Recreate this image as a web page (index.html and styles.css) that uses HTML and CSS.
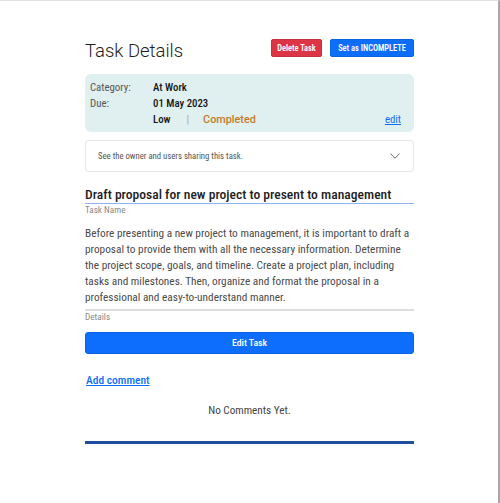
FILE: index.html
```html
<!DOCTYPE html>
<html>
<head>
<meta charset="utf-8">
<link rel="stylesheet" href="styles.css">
</head>
<body>
<div class="frame">
  <main class="page">
    <header class="head">
      <h1 class="title">Task Details</h1>
      <div class="actions">
        <button class="btn btn-red">Delete Task</button>
        <button class="btn btn-blue">Set as INCOMPLETE</button>
      </div>
    </header>

    <section class="info">
      <div class="row"><span class="lbl">Category:</span><span class="val">At Work</span></div>
      <div class="row"><span class="lbl">Due:</span><span class="val">01 May 2023</span></div>
      <div class="row">
        <span class="lbl"></span>
        <span class="val">Low</span>
        <span class="sep">|</span>
        <span class="status">Completed</span>
        <a class="edit" href="#">edit</a>
      </div>
    </section>

    <section class="accordion">
      <span>See the owner and users sharing this task.</span>
      <svg class="chev" width="10" height="6" viewBox="0 0 10 6"><path d="M0.5 0.6 L5 5.2 L9.5 0.6" fill="none" stroke="#555" stroke-width="0.9"/></svg>
    </section>

    <div class="field">
      <div class="name">Draft proposal for new project to present to management</div>
      <div class="flabel">Task Name</div>
    </div>

    <div class="field-details">
      <div class="details">Before presenting a new project to management, it is important to draft a proposal to provide them with all the necessary information. Determine the project scope, goals, and timeline. Create a project plan, including tasks and milestones. Then, organize and format the proposal in a professional and easy-to-understand manner.</div>
      <div class="flabel">Details</div>
    </div>

    <button class="btn-wide">Edit Task</button>

    <a class="add" href="#">Add comment</a>

    <p class="empty">No Comments Yet.</p>

    <hr class="rule">
  </main>
</div>
</body>
</html>
```

FILE: styles.css
```css
* { box-sizing: border-box; }
html, body { margin: 0; padding: 0; }
body {
  font-family: Roboto, Lato, sans-serif;
  font-stretch: 87.5%;
  color: #222;
  background: #fff;
}
.frame {
  width: 500px;
  height: 503px;
  border-top: 1px solid #e2e0e0;
  border-right: 2px solid #a9a9a9;
  overflow: hidden;
}
.page {
  width: 329px;
  margin: 0 0 0 85px;
  padding-top: 37px;
  display: flex;
  flex-direction: column;
}
.head {
  display: flex;
  justify-content: space-between;
  align-items: flex-start;
  height: 36px;
}
.title {
  margin: 0;
  font-size: 18.5px;
  font-weight: 300;
  font-stretch: 91%;
  line-height: 24px;
  color: #1e1e1e;
  padding-top: 1px;
}
.actions { display: flex; gap: 8px; margin-top: 1px; }
.btn {
  font-family: inherit;
  font-stretch: 87.5%;
  font-size: 8.4px;
  font-weight: 600;
  height: 18px;
  padding: 0;
  border-radius: 2px;
  color: #fff;
  border: 1px solid transparent;
  text-align: center;
}
.btn-red { width: 51px; background: #dc3545; border-color: #c9303e; }
.btn-blue { width: 84px; background: #0d6efd; border-color: #0a62e4; }

.info {
  background: #e0efef;
  border-radius: 6px;
  padding: 5px 13px 4px 5px;
  display: flex;
  flex-direction: column;
}
.row {
  display: flex;
  align-items: center;
  height: 16.33px;
  font-size: 10.8px;
}
.lbl { width: 63px; color: #555; }
.val { color: #151515; font-weight: 500; }
.sep { color: #aaa; margin: 0 14px 0 16px; }
.status { color: #c57a28; font-weight: 500; font-stretch: 100%; }
.edit { margin-left: auto; color: #0d6efd; }

.accordion {
  margin-top: 8px;
  height: 32px;
  border: 1px solid #e6e6e6;
  border-radius: 4px;
  display: flex;
  align-items: center;
  justify-content: space-between;
  padding: 0 13px 0 12px;
  font-size: 8.7px;
  color: #555;
}
.chev { display: block; }

.field { margin-top: 14px; }
.name {
  font-size: 13.6px;
  font-weight: 500;
  color: #1e1e1e;
  line-height: 17px;
  white-space: nowrap;
  border-bottom: 1.5px solid #8fb1f2;
}
.flabel {
  font-size: 9.2px;
  line-height: 10px;
  color: #8a8a8a;
  margin-top: 1px;
}
.field-details { margin-top: 11px; }
.details {
  font-size: 11.3px;
  line-height: 16px;
  color: #4a4a4a;
  padding-bottom: 3px;
  border-bottom: 2px solid #dedede;
}

.btn-wide {
  margin-top: 10px;
  height: 22px;
  width: 100%;
  background: #0d6efd;
  color: #fff;
  border: 1px solid #0a62e4;
  border-radius: 3px;
  font-family: inherit;
  font-stretch: 87.5%;
  font-size: 9.8px;
  font-weight: 500;
}
.add {
  margin-top: 19px;
  align-self: flex-start;
  color: #0d6efd;
  font-size: 11.5px;
  line-height: 14px;
  font-weight: 500;
  margin-left: 1px;
}
.empty {
  margin: 17px 0 0 0;
  text-align: center;
  font-size: 11.2px;
  line-height: 14px;
  color: #444;
}
.rule {
  margin: 23px 0 0 0;
  border: 0;
  height: 3px;
  background: #1f4e9f;
}
```
